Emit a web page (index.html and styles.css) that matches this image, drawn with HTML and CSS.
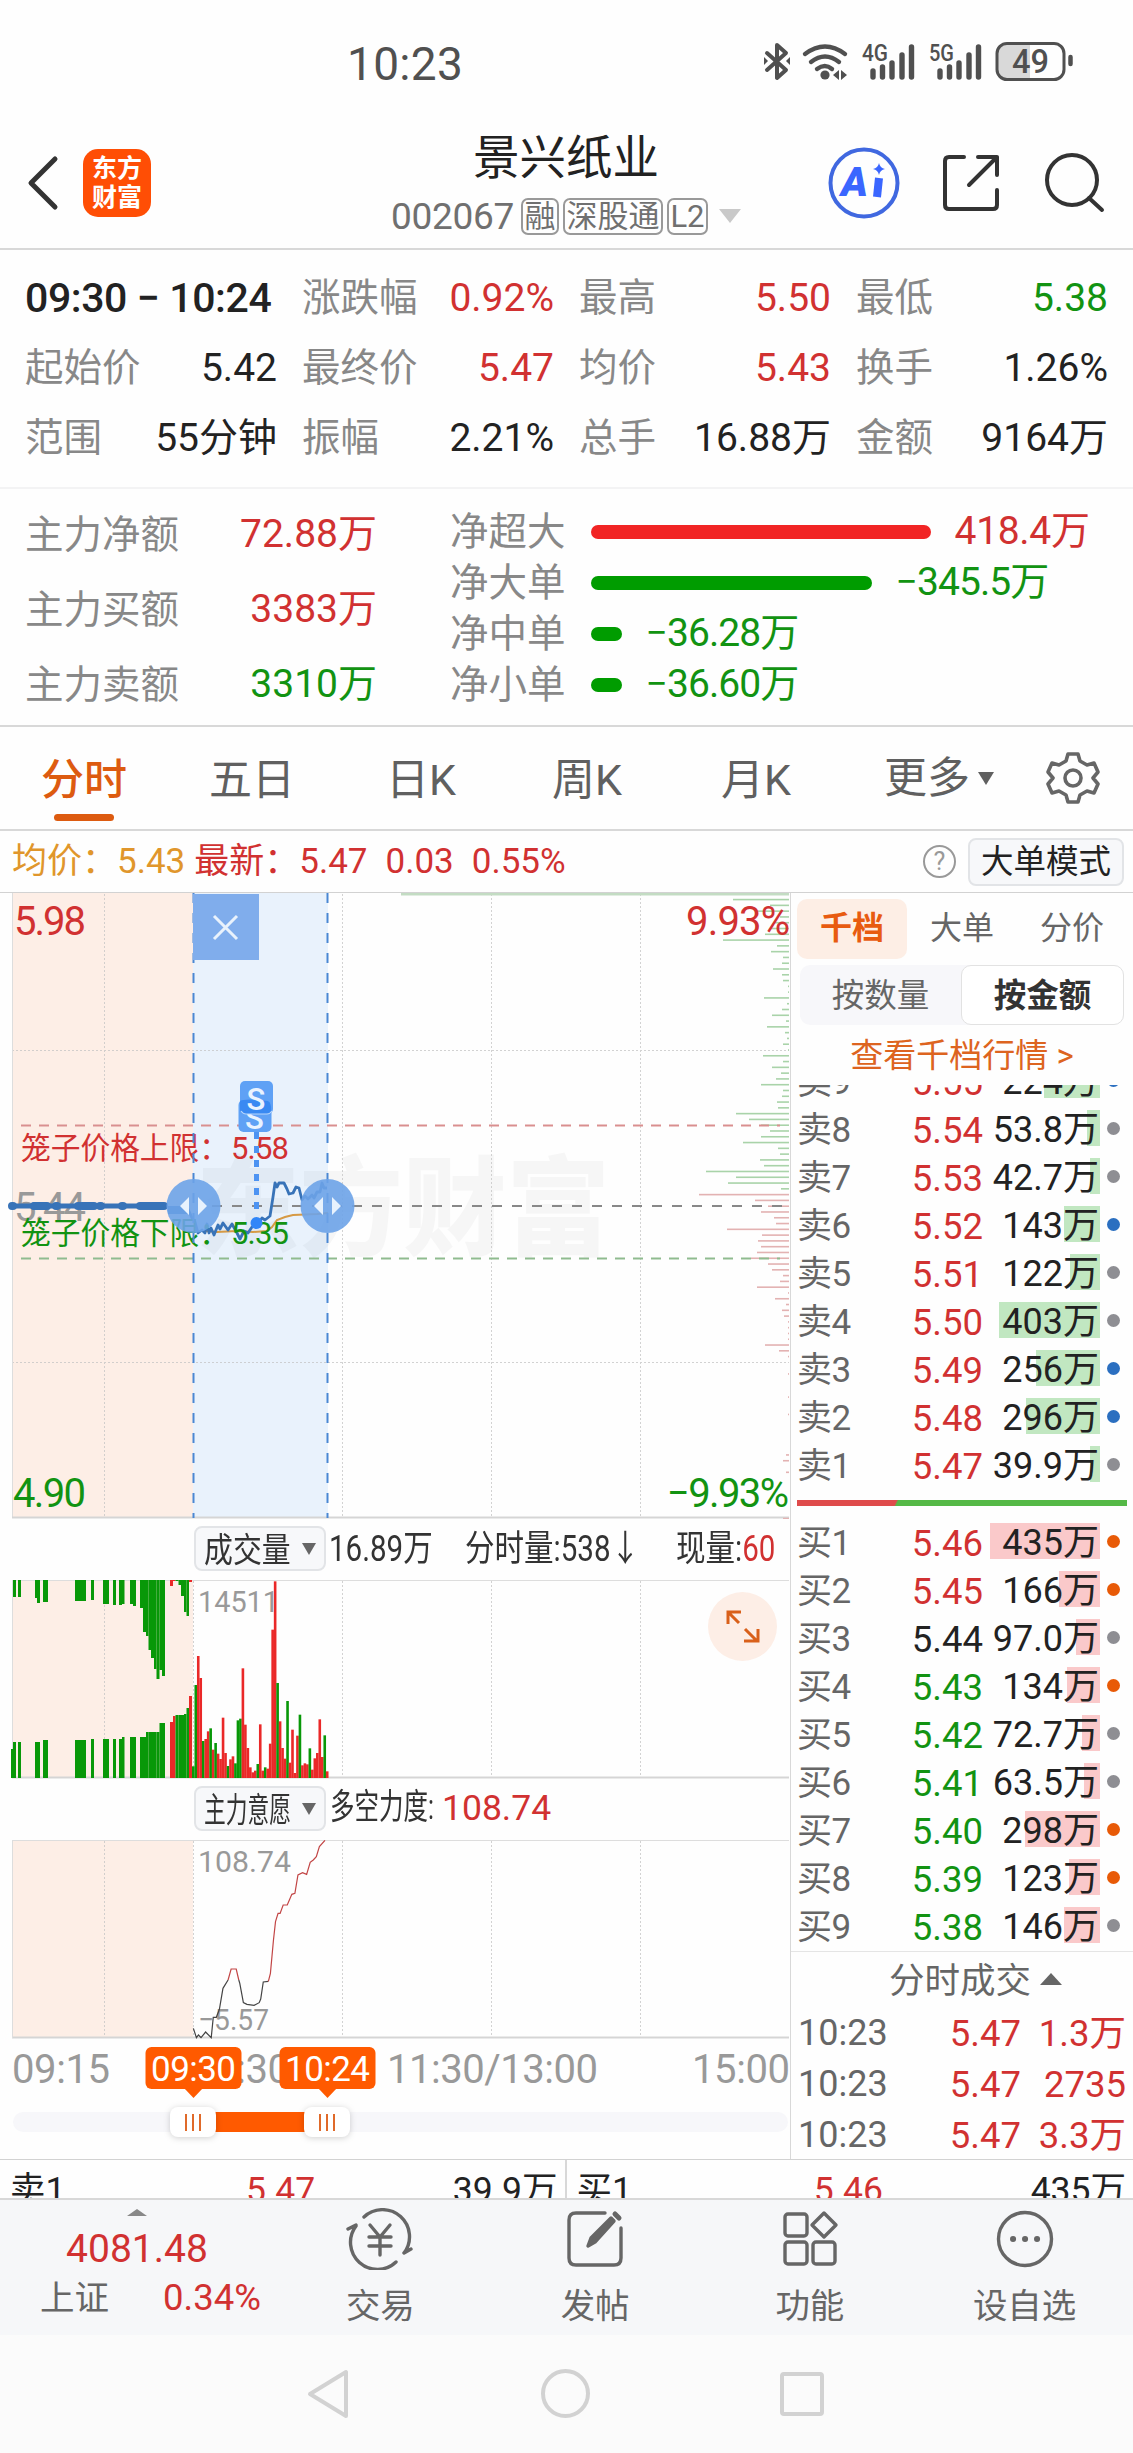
FILE: index.html
```html
<!DOCTYPE html>
<html lang="zh-CN">
<head>
<meta charset="utf-8">
<title>景兴纸业 002067</title>
<link rel="stylesheet" href="styles.css">
</head>
<body>
<div class="status">
  <span class="clock">10:23</span>
  <svg class="status-icons" width="313" height="42" viewBox="0 0 313 42" fill="none" stroke="#505050" stroke-linecap="round">
    <path d="M3 11l19 17-9 8V3l9 8L3 28" stroke-width="4" stroke-linejoin="round"/>
    <path d="M0 15l4 4-4 4zM26 15l-4 4 4 4z" fill="#505050" stroke="none"/>
    <path d="M41 12q20-15 40 0M47 20q14-11 28 0M53 27q8-6 15 0" stroke-width="4.4"/>
    <circle cx="61" cy="33" r="4.6" fill="#505050" stroke="none"/>
    <path d="M75 28v10l-6-5zM77 28v10l6-5z" fill="#505050" stroke="none"/>
    <path d="M109 35v-6M118.500 35V25M128 35V21M138 35V13M147.500 35V5M176 35v-6M185.500 35V25M195 35V21M205 35V13M214.500 35V5" stroke-width="5.400"/>
    <text x="98" y="19" textLength="26" lengthAdjust="spacingAndGlyphs">4G</text>
    <text x="165" y="19" textLength="25" lengthAdjust="spacingAndGlyphs">5G</text>
    <path d="M243 2h23v36h-23a10 10 0 0 1-10-10V12a10 10 0 0 1 10-10z" fill="#d9d9d9" stroke="none"/>
    <rect x="233" y="1.500" width="67" height="36" rx="10" stroke-width="3"/>
    <path d="M306.500 15v7" stroke-width="4.500"/>
    <text class="batt" x="248" y="31" textLength="37" lengthAdjust="spacingAndGlyphs">49</text>
  </svg>
</div>

<header class="header">
  <svg class="back" width="34" height="56" viewBox="0 0 34 56"><path d="M30 4L6 28l24 24" fill="none" stroke="#333" stroke-width="5" stroke-linecap="round" stroke-linejoin="round"/></svg>
  <div class="brand"><span>东方</span><span>财富</span></div>
  <div class="title">
    <h1>景兴纸业</h1>
    <div class="code"><span class="num">002067</span><i>融</i><i>深股通</i><i>L2</i><b class="caret"></b></div>
  </div>
  <svg class="tools" width="280" height="74" viewBox="0 0 280 74" fill="none" stroke="#333" stroke-width="4" stroke-linecap="round" stroke-linejoin="round">
    <circle cx="37" cy="37" r="33.500" stroke="#4068e0"/>
    <text class="ai" x="14" y="50" textLength="27" lengthAdjust="spacingAndGlyphs">A</text>
    <path d="M52 32l-2 19" stroke="#3a66ff" stroke-width="8" stroke-linecap="butt"/>
    <path d="M52 17q1 5 6 6-5 1-6 6-1-5-6-6 5-1 6-6z" fill="#3a66ff" stroke="none"/>
    <path d="M137 11h-15q-4 0-4 4v44q0 4 4 4h44q4 0 4-4V44M151 11h19v18M170 11l-28 28"/>
    <circle cx="245" cy="34" r="25"/><path d="M262 52l13 12"/>
  </svg>
</header>

<section class="range">
  <div class="strong">09:30 − 10:24</div>
  <div><label>涨跌幅</label><span class="r">0.92%</span></div>
  <div><label>最高</label><span class="r">5.50</span></div>
  <div><label>最低</label><span class="g">5.38</span></div>
  <div><label>起始价</label><span>5.42</span></div>
  <div><label>最终价</label><span class="r">5.47</span></div>
  <div><label>均价</label><span class="r">5.43</span></div>
  <div><label>换手</label><span>1.26%</span></div>
  <div><label>范围</label><span>55分钟</span></div>
  <div><label>振幅</label><span>2.21%</span></div>
  <div><label>总手</label><span>16.88万</span></div>
  <div><label>金额</label><span>9164万</span></div>
</section>

<section class="funds">
  <div class="main-funds">
    <div><label>主力净额</label><span class="r">72.88万</span></div>
    <div><label>主力买额</label><span class="r">3383万</span></div>
    <div><label>主力卖额</label><span class="g">3310万</span></div>
  </div>
  <div class="net-funds">
    <div class="r"><label>净超大</label><i style="width:340px"></i><span>418.4万</span></div>
    <div class="g"><label>净大单</label><i style="width:281px"></i><span>−345.5万</span></div>
    <div class="g"><label>净中单</label><i style="width:31px"></i><span>−36.28万</span></div>
    <div class="g"><label>净小单</label><i style="width:31px"></i><span>−36.60万</span></div>
  </div>
</section>

<nav class="tabs">
  <span class="on">分时</span><span>五日</span><span>日K</span><span>周K</span><span>月K</span>
  <span class="more">更多<b></b></span>
  <svg width="54" height="54" viewBox="-27 -27 54 54" fill="none" stroke="#666" stroke-width="3.600" stroke-linejoin="round"><path d="M-5-24H5L7-17 14-13 21-15 25-6 20 0 25 6 21 15 14 13 7 17 5 24H-5L-7 17-14 13-21 15-25 6-20 0-25-6-21-15-14-13-7-17z"/><circle r="8"/></svg>
</nav>

<div class="quote">
  <span class="avg">均价：</span><span class="avg v1">5.43</span>
  <span class="r">最新：</span><span class="r v2">5.47</span><span class="r v3">0.03</span><span class="r">0.55%</span>
  <em>?</em><button>大单模式</button>
</div>

<main class="main">
  <div class="left">
    <svg class="plot" width="790" height="626" viewBox="0 893 790 626">
      <rect x="12" y="893" width="181" height="625" fill="#fdeee6"/>
      <rect x="193" y="893" width="135" height="625" fill="#e9f2fc"/>
      <text class="mark" x="196" y="1247" textLength="414" lengthAdjust="spacingAndGlyphs">东方财富</text>
      <g class="grid"><path d="M104.500 894v624M342.500 894v624M491.500 894v624M640.500 894v624M12 1050.500H789M12 1362.500H789"/></g>
      <path d="M12.500 893v625" stroke="#ddd"/><path d="M12 1517.500H789" stroke="#d5d5d5" stroke-width="2"/>
      <g id="depth"></g>
      <path d="M21 1125.500H780" stroke="#d98f8f" stroke-width="2" stroke-dasharray="10 8"/>
      <path d="M21 1258.500H780" stroke="#8fbb8f" stroke-width="2" stroke-dasharray="10 8"/>
      <path d="M212 1206H784" stroke="#888" stroke-width="2" stroke-dasharray="10 10"/>
      <text class="c40 red" x="14" y="935" textLength="72">5.98</text>
      <text class="c40 red" x="686" y="935" textLength="104">9.93%</text>
      <text class="c40 gray" x="14" y="1221" textLength="72">5.44</text>
      <text class="c40 green" x="13" y="1507" textLength="73">4.90</text>
      <text class="c40 green" x="667" y="1507" textLength="122">−9.93%</text>
      <path d="M205 1231l12 1 20-1 16 1 14-1 5-4 5-7 8-3 8-2 24-1 11-1" fill="none" stroke="#d69a45" stroke-width="2"/>
      <path d="M12 1206H165" stroke="#3873b8" stroke-width="5"/>
      <path d="M12 1206H165" stroke="#3873b8" stroke-width="8" stroke-linecap="round" stroke-dasharray="1 21"/>
      <path d="M35 1206h12M82 1206h12M140 1206h24" stroke="#3873b8" stroke-width="8" stroke-linecap="round"/>
      <path d="M168 1210h20" stroke="#3873b8" stroke-width="8"/>
      <path d="M188 1209l4 9 3 4 3 11 4-3 3 3 2-9 2 9 2-5 3 7 4-10 2 4 3-6 5 7 4-6 5 9 3 6 4-8 4 2 4-6 5-2 5-7 3 2 5-4 3-19 2-14 2 4 2-4 5 0 3 6 2 5 4-1 3-6 3 1 3 12 3-4 3 3 4-4 2 3 3-6 3 0 2-9 2 5 3 0" fill="none" stroke="#3873b8" stroke-width="2.800" stroke-linejoin="round"/>
      <text class="c31 red" x="21" y="1159" textLength="208" lengthAdjust="spacingAndGlyphs">笼子价格上限：</text>
      <text class="c31 red" x="231" y="1159" textLength="58">5.58</text>
      <text class="c31 green" x="21" y="1244" textLength="208" lengthAdjust="spacingAndGlyphs">笼子价格下限：</text>
      <text class="c31 green" x="231" y="1244" textLength="58">5.35</text>
      <path d="M193.500 893v625M327.500 893v625" stroke="#4a87d3" stroke-width="2" stroke-dasharray="10 10"/>
      <rect x="193" y="894" width="66" height="66" fill="#80adec"/>
      <path d="M214 916l23 23M237 916l-23 23" stroke="#e9f2fc" stroke-width="3"/>
      <path d="M256.500 1132v84" stroke="#4d93f2" stroke-width="5" stroke-dasharray="7 7"/>
      <circle cx="256.500" cy="1223" r="6" fill="#3186f8"/>
      <rect x="238.500" y="1100" width="33" height="32" rx="5" fill="#5fa1f5"/>
      <text class="sell" x="245" y="1129" textLength="20">S</text>
      <rect x="240" y="1081" width="33" height="33" rx="5" fill="#5fa1f5"/>
      <path d="M240 1101q5-3 28 0 4 2 3 13h-26q-5 0-5-5z" fill="#3989f2"/>
      <path d="M241 1111q2 3 5 3h21q3 0 5-3" fill="none" stroke="#b8d6fb" stroke-width="1.200"/>
      <text class="sell" x="246.500" y="1110" textLength="20">S</text>
      <g fill="#6da3e8" fill-opacity=".9"><circle cx="193.500" cy="1206" r="27"/><circle cx="327.500" cy="1206" r="27"/></g>
      <path d="M189 1197v18l-9-9zM198 1197v18l9-9zM323 1197v18l-9-9zM332 1197v18l9-9z" fill="#e8f2fd"/>
    </svg>

    <div class="sub">
      <button><span class="w86"><u>成交量</u></span><b></b></button>
      <span class="cx a1">16.89万</span><span class="cx a2">分时量:538↓</span><span class="cx">现量:<i class="r">60</i></span>
    </div>

    <svg class="plot" width="790" height="199" viewBox="0 1580 790 199">
      <rect x="12" y="1580" width="181" height="198" fill="#fdeee6"/>
      <g class="grid"><path d="M104.500 1581v197M193.500 1581v197M342.500 1581v197M491.500 1581v197M640.500 1581v197"/></g>
      <path d="M12 1580.500H789" stroke="#ddd"/><path d="M12 1777.500H789" stroke="#d5d5d5" stroke-width="2"/><path d="M12.500 1580v198" stroke="#ddd"/>
      <g id="volume"></g>
      <text class="c30 gray" x="198" y="1612" textLength="81" lengthAdjust="spacingAndGlyphs">14511</text>
      <circle cx="742.500" cy="1626.500" r="34.500" fill="#fdeee6"/>
      <path d="M739 1623l-11-11M728 1624v-12h13M745 1629l12 12M758 1629v12h-14" fill="none" stroke="#d9601a" stroke-width="3"/>
    </svg>

    <div class="sub sub2">
      <button><span class="w64"><u>主力意愿</u></span><b></b></button>
      <span class="cn">多空力度:</span><span class="r force">108.74</span>
    </div>

    <svg class="plot" width="790" height="199" viewBox="0 1840 790 199">
      <rect x="12" y="1840" width="181" height="198" fill="#fdeee6"/>
      <g class="grid"><path d="M104.500 1841v197M193.500 1841v197M342.500 1841v197M491.500 1841v197M640.500 1841v197"/></g>
      <path d="M12 1840.500H789" stroke="#ddd"/><path d="M12 2037.500H789" stroke="#d5d5d5" stroke-width="2"/><path d="M12.500 1840v198" stroke="#ddd"/>
      <text class="c30 gray" x="198" y="1872" textLength="93" lengthAdjust="spacingAndGlyphs">108.74</text>
      <text class="c30 gray" x="198" y="2030" textLength="71" lengthAdjust="spacingAndGlyphs">−5.57</text>
      <g id="force"></g>
    </svg>

    <svg class="plot" width="790" height="120" viewBox="0 2039 790 120">
      <g class="c40 gray">
        <text x="12" y="2083" textLength="98">09:15</text>
        <text x="192" y="2083" textLength="98">09:30</text>
        <text x="387" y="2083" textLength="211">11:30/13:00</text>
        <text x="692" y="2083" textLength="98">15:00</text>
      </g>
      <rect x="13" y="2112" width="775" height="20" rx="10" fill="#f7f7fa"/>
      <rect x="205" y="2112" width="110" height="20" fill="#ff5a00"/>
      <g class="knob"><rect x="170" y="2107" width="46" height="30" rx="8"/><rect x="304" y="2107" width="46" height="30" rx="8"/></g>
      <path d="M186 2114v17M193 2114v17M200 2114v17M320 2114v17M327 2114v17M334 2114v17" stroke="#e06a2a" stroke-width="2"/>
      <g fill="#ff5a00"><rect x="145.500" y="2047" width="96" height="42" rx="6"/><path d="M184 2088h19l-9.500 10z"/><rect x="279.500" y="2047" width="96" height="42" rx="6"/><path d="M318 2088h19l-9.500 10z"/></g>
      <text class="flag" x="151" y="2081" textLength="85">09:30</text>
      <text class="flag" x="285" y="2081" textLength="85">10:24</text>
    </svg>
  </div>

  <aside class="book">
    <div class="btabs"><span class="on">千档</span><span>大单</span><span>分价</span></div>
    <div class="seg"><span>按数量</span><span class="on">按金额</span></div>
    <div class="link">查看千档行情 &gt;</div>
    <div class="asks">
      <div class="row"><label>卖9</label><span class="r">5.55</span><span class="amt"><i style="width:56px"></i>224万</span><b class="bl"></b></div>
      <div class="row"><label>卖8</label><span class="r">5.54</span><span class="amt"><i style="width:13px"></i>53.8万</span><b></b></div>
      <div class="row"><label>卖7</label><span class="r">5.53</span><span class="amt"><i style="width:10px"></i>42.7万</span><b></b></div>
      <div class="row"><label>卖6</label><span class="r">5.52</span><span class="amt"><i style="width:36px"></i>143万</span><b class="bl"></b></div>
      <div class="row"><label>卖5</label><span class="r">5.51</span><span class="amt"><i style="width:30px"></i>122万</span><b></b></div>
      <div class="row"><label>卖4</label><span class="r">5.50</span><span class="amt"><i style="width:101px"></i>403万</span><b></b></div>
      <div class="row"><label>卖3</label><span class="r">5.49</span><span class="amt"><i style="width:64px"></i>256万</span><b class="bl"></b></div>
      <div class="row"><label>卖2</label><span class="r">5.48</span><span class="amt"><i style="width:74px"></i>296万</span><b class="bl"></b></div>
      <div class="row"><label>卖1</label><span class="r">5.47</span><span class="amt"><i style="width:10px"></i>39.9万</span><b></b></div>
    </div>
    <div class="ratio"></div>
    <div class="bids">
      <div class="row"><label>买1</label><span class="r">5.46</span><span class="amt"><i style="width:110px"></i>435万</span><b class="or"></b></div>
      <div class="row"><label>买2</label><span class="r">5.45</span><span class="amt"><i style="width:41px"></i>166万</span><b class="or"></b></div>
      <div class="row"><label>买3</label><span>5.44</span><span class="amt"><i style="width:24px"></i>97.0万</span><b></b></div>
      <div class="row"><label>买4</label><span class="g">5.43</span><span class="amt"><i style="width:33px"></i>134万</span><b class="or"></b></div>
      <div class="row"><label>买5</label><span class="g">5.42</span><span class="amt"><i style="width:18px"></i>72.7万</span><b></b></div>
      <div class="row"><label>买6</label><span class="g">5.41</span><span class="amt"><i style="width:16px"></i>63.5万</span><b></b></div>
      <div class="row"><label>买7</label><span class="g">5.40</span><span class="amt"><i style="width:75px"></i>298万</span><b class="or"></b></div>
      <div class="row"><label>买8</label><span class="g">5.39</span><span class="amt"><i style="width:31px"></i>123万</span><b class="or"></b></div>
      <div class="row"><label>买9</label><span class="g">5.38</span><span class="amt"><i style="width:36px"></i>146万</span><b></b></div>
    </div>
    <div class="deals-title">分时成交<b></b></div>
    <div class="deal"><label>10:23</label><span>5.47</span><span>1.3万</span></div>
    <div class="deal"><label>10:23</label><span>5.47</span><span>2735</span></div>
    <div class="deal last"><label>10:23</label><span>5.47</span><span>3.3万</span></div>
  </aside>
</main>

<div class="best">
  <div><span>卖1</span><span class="r">5.47</span><span>39.9万</span></div>
  <div><span>买1</span><span class="r">5.46</span><span>435万</span></div>
</div>

<footer class="foot">
  <div class="index"><b></b><strong>4081.48</strong><p><span>上证</span><span class="r">0.34%</span></p></div>
  <div class="item"><svg width="68" height="62" viewBox="-34 -31 68 62"><path d="M-16-22A27 27 0 0 1 24 14M16 23A27 27 0 0 1-24-13M-32-10l8-4M24 14l7-4"/><path d="M-10-14L0-2 10-14M0-2v18M-11-2h22M-11 7h22"/></svg><span>交易</span></div>
  <div class="item"><svg width="68" height="62" viewBox="-34 -31 68 62"><path d="M10-26h-29q-7 0-7 7v38q0 7 7 7h38q7 0 7-7v-30"/><path d="M-7 7L-4-1 16-21l3 3L0 3z" fill="#666"/><path d="M20-25l4 4" stroke-width="5"/></svg><span>发帖</span></div>
  <div class="item"><svg width="68" height="62" viewBox="-34 -31 68 62"><rect x="-25" y="-25" width="22" height="22" rx="3"/><rect x="-25" y="3" width="22" height="22" rx="3"/><rect x="3" y="3" width="22" height="22" rx="3"/><path d="M14-26l12 12-12 12L2-14z"/></svg><span>功能</span></div>
  <div class="item"><svg width="68" height="62" viewBox="-34 -31 68 62"><circle r="26.500"/><path d="M-12 0h.1M0 0h.1M12 0h.1" stroke-width="6"/></svg><span>设自选</span></div>
</footer>

<div class="sysnav">
  <svg width="520" height="56" viewBox="0 0 520 56" fill="none" stroke="#d2d2d2" stroke-width="4" stroke-linejoin="round"><path d="M41 6v44L5 28z"/><circle cx="260.500" cy="27.500" r="22.500"/><rect x="477" y="8" width="40" height="40" rx="2"/></svg>
</div>
<script src="chart.js"></script>
</body>
</html>
```
FILE: styles.css
```css
* { box-sizing: border-box; }
body { margin: 0; width: 1133px; height: 2453px; overflow: hidden; background: #fefefe; color: #222; font-family: Roboto, "Noto Sans CJK SC", sans-serif; font-size: 38px; }
i, em { font-style: normal; }
u { text-decoration: none; }
button { font: inherit; color: inherit; background: #f7f8fa; border: 2px solid #e2e4e7; border-radius: 8px; padding: 0; }
.r { color: #d13131; }
.g { color: #129312; }

.status { height: 124px; display: flex; justify-content: space-between; padding: 41px 56px 0 347px; }
.clock { font-size: 46px; line-height: 46px; color: #505050; letter-spacing: .3px; }
.status-icons text { font-size: 24px; font-weight: 500; fill: #505050; stroke: none; }
.status-icons .batt { font-size: 34px; }
.status-icons { margin: 1px 0 0; overflow: visible; }

.header { height: 126px; border-bottom: 2px solid #d8d8d8; display: flex; align-items: flex-start; }
.back { margin: 31px 0 0 25px; }
.brand { width: 68px; height: 68px; margin: 25px 0 0 24px; border-radius: 15px; background: #ff4e05; color: #fff; font-weight: 600; font-size: 25px; line-height: 29px; display: flex; flex-direction: column; align-items: center; justify-content: center; }
.title { flex: 0 0 auto; width: 354px; margin-left: 238px; display: flex; flex-direction: column; align-items: center; }
h1 { margin: 6px 0 0 0; font-size: 46.500px; line-height: 56px; font-weight: 400; color: #222; }
.code { height: 38px; margin-top: 11px; display: flex; align-items: center; gap: 4px; color: #707070; font-size: 37px; white-space: nowrap; }
.code .num { letter-spacing: -.3px; margin-right: 3px; }
.code i { height: 37px; border: 2px solid #999; border-radius: 7px; padding: 0 1.500px; font-size: 31px; line-height: 33px; }
.caret { border: 11px solid transparent; border-top: 14px solid #c9c9c9; border-bottom: 0; margin-left: 7px; }
.tools { margin: 22px 0 0 84px; }
.ai { font-size: 40px; font-weight: 900; font-style: italic; fill: #3a66ff; stroke: none; }

.range { height: 239px; padding: 13px 25px 0; border-bottom: 2px solid #f3f3f4; display: grid; grid-template-columns: repeat(4, 252px); column-gap: 25px; grid-auto-rows: 70px; font-size: 39px; line-height: 70px; }
.range > div { display: flex; justify-content: space-between; white-space: nowrap; }
label { color: #888; font-size: 38.500px; }
.range .strong { font-size: 41px; font-weight: 500; letter-spacing: -.4px; justify-content: flex-start; }

.funds { height: 238px; border-bottom: 2px solid #d8d8d8; display: flex; padding-left: 25px; }
.main-funds { width: 352px; padding-top: 8px; }
.main-funds div { height: 75px; line-height: 75px; display: flex; justify-content: space-between; font-size: 39px; }
.net-funds { margin-left: 73px; padding-top: 17px; }
.net-funds div { height: 51px; display: flex; align-items: center; font-size: 39px; line-height: 51px; }
.net-funds i { height: 14px; border-radius: 7px; background: #009c00; margin: 0 24px 0 25px; }
.net-funds .r i { background: #f12424; }
.net-funds span { letter-spacing: -.3px; }
.net-funds .g span { letter-spacing: -.9px; }

.tabs { height: 104px; border-bottom: 2px solid #d8d8d8; display: flex; align-items: stretch; font-size: 43px; line-height: 106px; color: #606060; padding-left: 41px; }
.tabs span { white-space: nowrap; width: 86px; flex: none; }
.tabs span:nth-child(2) { margin-left: 82px; }
.tabs span:nth-child(3) { margin-left: 91px; }
.tabs span:nth-child(4) { margin-left: 80px; }
.tabs span:nth-child(5) { margin-left: 83px; }
.tabs .on { color: #dd5b10; font-weight: 500; position: relative; }
.tabs .on::after { content: ""; width: 60px; height: 7px; border-radius: 4px; background: #dd5b10; position: absolute; left: 13px; bottom: 8px; }
.tabs .more { margin-left: 77px; width: 113px; display: flex; align-items: center; }
.more b { border: 8px solid transparent; border-top: 13px solid #606060; border-bottom: 0; margin-left: 8px; }
.tabs svg { margin: 24px 0 0 49px; }

.quote { height: 61px; display: flex; align-items: center; padding: 0 9px 0 12px; font-size: 35px; line-height: 60px; white-space: nowrap; }
.quote .avg { color: #e0962c; }
.quote .v1 { margin-right: 9px; }
.quote .v2 { margin-right: 18px; }
.quote .v3 { margin-right: 18px; }
.quote em { margin-left: auto; width: 33px; height: 33px; border: 2.500px solid #999; border-radius: 50%; color: #999; font-size: 25px; line-height: 29px; text-align: center; }
.quote button { width: 156px; height: 48px; margin-left: 12px; font-size: 32.500px; line-height: 44px; }

.main { height: 1268px; border-top: 1px solid #d2d2d2; border-bottom: 1px solid #d2d2d2; display: flex; }
.left { width: 791px; border-right: 1px solid #d8d8d8; flex: none; }
.plot { display: block; overflow: hidden; }
.grid { stroke: #c4c4c4; stroke-width: 1; stroke-dasharray: 2 2; opacity: .75; }
.mark { font-size: 108px; font-weight: 900; fill: #000; opacity: .026; }
.c40 { font-size: 40px; }
.c31 { font-size: 31px; }
.c30 { font-size: 30px; }
.red { fill: #d13131; }
.green { fill: #129312; }
.gray { fill: #999; }
.sell { font-size: 31px; font-weight: 500; fill: #eaf3ff; }
.flag { font-size: 35px; fill: #fff; }
.knob { fill: #fff; filter: drop-shadow(0 1px 3px rgba(0, 0, 0, .18)); }

.sub { height: 61px; padding: 7px 0 0 194px; display: flex; line-height: 44px; white-space: nowrap; color: #333; }
.sub button { width: 132px; height: 45px; display: flex; align-items: center; justify-content: space-between; padding: 0 8px 0 8px; flex: none; }
.sub button span { width: 88px; flex: none; text-align: left; }
.sub button u { display: inline-block; font-size: 34px; line-height: 41px; transform-origin: 0 50%; transform: scaleX(.85); }
.sub button .w64 u { transform: scaleX(.64); }
.sub button b { border: 7px solid transparent; border-top: 12px solid #666; border-bottom: 0; }
.cx { transform: scaleX(.82); transform-origin: 0 50%; font-size: 36px; margin-left: 3px; flex: none; line-height: 46px; }
.a1 { width: 133px; }
.a2 { width: 208px; }
.cn { transform: scaleX(.7); transform-origin: 0 50%; font-size: 35px; width: 110px; margin-left: 4px; flex: none; }
.force { font-size: 35.500px; margin-left: 2px; }

.book { width: 342px; display: flex; flex-direction: column; }
.btabs { height: 60px; margin: 6px 0 6px 6px; display: flex; font-size: 32px; line-height: 59px; color: #666; flex: none; }
.btabs span { width: 110px; text-align: center; }
.btabs .on { background: #fdeee5; color: #e85b10; font-weight: 700; border-radius: 10px; }
.seg { height: 60px; margin: 0 9px; background: #f7f7fa; border-radius: 10px; display: flex; font-size: 32.500px; line-height: 56px; color: #666; flex: none; }
.seg span { flex: 1; text-align: center; line-height: 62px; }
.seg .on { color: #333; font-weight: 700; background: #fff; border: 1px solid #e2e2e2; border-radius: 10px; line-height: 60px; }
.link { height: 60px; line-height: 62px; text-align: center; color: #dd6420; font-size: 33px; flex: none; }
.asks { height: 405px; flex: none; overflow: hidden; display: flex; flex-direction: column; justify-content: flex-end; }
.row { height: 48px; flex: none; display: grid; grid-template-columns: 60px 126px 117px 1fr; line-height: 49px; font-size: 36.500px; padding-left: 6px; }
.row label { font-size: 35px; color: #666; white-space: nowrap; letter-spacing: -.5px; }
.row span { text-align: right; }
.row .amt { position: relative; z-index: 0; padding-right: 1px; font-size: 36px; white-space: nowrap; }
.amt i { position: absolute; z-index: -1; right: 0; top: 4px; height: 36px; background: #c1e7c1; }
.bids .amt i { background: #fac9ca; }
.row b { width: 13px; height: 13px; border-radius: 50%; background: #8e8e93; margin: 16px 0 0 7px; }
.row .bl { background: #2b6fc0; }
.row .or { background: #e85a07; }
.ratio { height: 6px; margin: 10px 6px 13px; background: linear-gradient(115deg, #df4b4b 0 30%, #55b947 30.500%); flex: none; }
.bids { flex: none; }
.deals-title { height: 58px; border-top: 1px solid #e5e5e5; font-size: 35.500px; line-height: 58px; color: #666; display: flex; justify-content: center; align-items: center; margin-left: 33px; margin-right: 9px; flex: none; box-shadow: -33px -1px 0 -0px #fefefe; }
.deals-title b { border: 11px solid transparent; border-bottom: 12px solid #666; border-top: 0; margin-left: 9px; margin-right: -2px; margin-bottom: 4px; }
.deals-title { margin: 0; padding-left: 25px; box-shadow: none; }
.deal { height: 51px; line-height: 49px; display: grid; grid-template-columns: 100px 123px 105px; padding-left: 7px; font-size: 36.500px; color: #d13131; flex: none; }
.deal.last { height: 48px; }
.deal label { font-size: 36px; color: #666; }
.deal span { text-align: right; }

.best { height: 40px; display: flex; overflow: hidden; border-bottom: 2px solid #d8d8d8; }
.best div { width: 567px; display: flex; justify-content: space-between; padding: 1px 7px 0 10px; border-right: 2px solid #d8d8d8; font-size: 35.500px; line-height: 59px; height: 59px; }
.best div:last-child { border: 0; }
.best span:nth-child(2) { margin-left: 43px; }
.best div:last-child span:nth-child(2) { margin-left: 34px; }

.foot { height: 135px; background: #f6f7f9; display: flex; color: #666; }
.index { width: 274px; display: flex; flex-direction: column; align-items: center; }
.index b { border: 10px solid transparent; border-bottom: 7px solid #888; border-top: 0; margin-top: 9px; }
.index strong { font-size: 39px; font-weight: 400; line-height: 40px; margin-top: 13px; color: #d13131; }
.index p { margin: 4px 0 0 30px; width: 244px; padding: 0 0 0 10px; display: flex; gap: 54px; font-size: 34.500px; line-height: 50px; }
.index p .r { font-size: 36.500px; }
.item { width: 215px; display: flex; flex-direction: column; align-items: center; font-size: 34.500px; line-height: 50px; margin-left: -1px; margin-right: 1px; }
.item svg { margin: 8px 0 11px; fill: none; stroke: #666; stroke-width: 3.400; stroke-linecap: round; stroke-linejoin: round; }
.sysnav { height: 119px; background: #fbfbfb; padding: 31px 0 0 305px; }
```
FILE: chart.js
```js
const NS = 'http://www.w3.org/2000/svg';
function add(id, tag, attrs) {
  const el = document.createElementNS(NS, tag);
  for (const k in attrs) el.setAttribute(k, attrs[k]);
  document.getElementById(id).appendChild(el);
}
const GREEN = '#089808', RED = '#ea2828';

// Order depth by price level: left edge of each bar, 5.78px per level.
const levels = [401,733,770,757,780,775,770,765,723,777,771,783,782,773,782,783,788,788,764,787,782,772,786,767,785,787,783,788,763,783,772,781,776,761,783,782,777,778,736,749,761,770,761,743,778,780,760,764,706,736,728,781,699,755,768,761,774,776,727,762,758,761,757,751,768,772,783,780,757,788,775,786,782,784,788,788,788,788,765,779,788,789,789,788,789,789,789,788,789,789,788,789,789,789,789,789,789,786,783,789,786,789,789,789,789,789,789,789,783];
levels.forEach((x, i) => add('depth', 'rect', {
  x, y: 893 + i * 5.785, width: 789 - x, height: i ? 1.6 : 2.5, fill: i === 0 ? '#c3dcc3' : i < 52 ? '#a9d3a9' : '#e3b2b2'
}));

// Call auction: [x0, x1, depth of upper bar, top of lower bar, red]
const auction = [[11,13,0,1749],[13,16,1597,1742],[18,21,1597,1742],[35,37,1598,1742],[37,40,1603,1742],[43,48,1602,1740],[75,86,1601,1740],[91,94,1600,1739],[103,109,1604,1739],[113,116,1605,1739],[119,122,1605,1739],[122,124.5,1604,1737],[130,133,1604,1737],[133,136,1606,1737],[140,143,1608,1737],[143,146,1632,1737],[146,148.5,1636,1732],[148.5,151,1650,1732],[151,154,1658,1732],[154,156.5,1669,1732],[156.5,159.5,1679,1732],[159.5,162,1670,1723],[162,165,1676,1723],[170,173,1586,1722,1],[173,175.5,1581,1716,1],[175.5,178.5,1581,1715],[178.5,181,1585,1715],[181,184,1596,1715],[184,186.5,1612,1714],[186.5,189,1616,1708],[189,192,1582,1696,1]];
auction.forEach(([a, b, up, low, red]) => {
  const fill = red ? RED : GREEN;
  if (up) add('volume', 'rect', { x: a, y: 1580, width: b - a, height: up - 1580, fill });
  add('volume', 'rect', { x: a, y: low, width: b - a, height: 1778 - low, fill });
});

// Volume per minute: colour and top edge
const minutes = 'g798 g554 r467 r533 g722 r716 r693 g684 r748 g728 r760 r776 r652 r758 g797 r777 r768 g789 g660 g655 r504 r673 r743 r801 r816 r811 g791 r672 r811 g801 r805 r730 r388 r243 g548 r663 r743 r775 g602 r787 r688 r818 r706 g643 r795 r789 r792 g744 r808 r774 r758 r657 r770 g705 r813'.split(' ');
minutes.forEach((m, i) => {
  const h = (833 - m.slice(1)) / 3;
  add('volume', 'rect', { x: 192 + i * 2.48, y: 1778 - h, width: 2.6, height: h, fill: m[0] === 'g' ? GREEN : RED });
});

// Long/short force, split where it crosses the threshold
const force = [[0,'379,745 385,773 389,765 394,773 403,756 414,773 418,712 424,712 430,688 437,625 447,600'],[1,'447,600 453,567 463,567 468,600'],[0,'468,600 470,610 477,668 484,673 498,676 508,668 511,657 516,606 526,604'],[1,'526,604 530,580 536,480 540,425 545,400 549,400 555,375 563,375 572,343 578,340 584,285 593,278 601,283 608,247 614,240 620,230 626,200 637,181']];
force.forEach(([red, pts]) => add('force', 'polyline', {
  points: pts.split(' ').map(p => { const [x, y] = p.split(','); return x / 1.96 + ',' + (1780 + y / 3); }).join(' '),
  fill: 'none', stroke: red ? '#c24545' : '#444', 'stroke-width': 1.2
}));
```
